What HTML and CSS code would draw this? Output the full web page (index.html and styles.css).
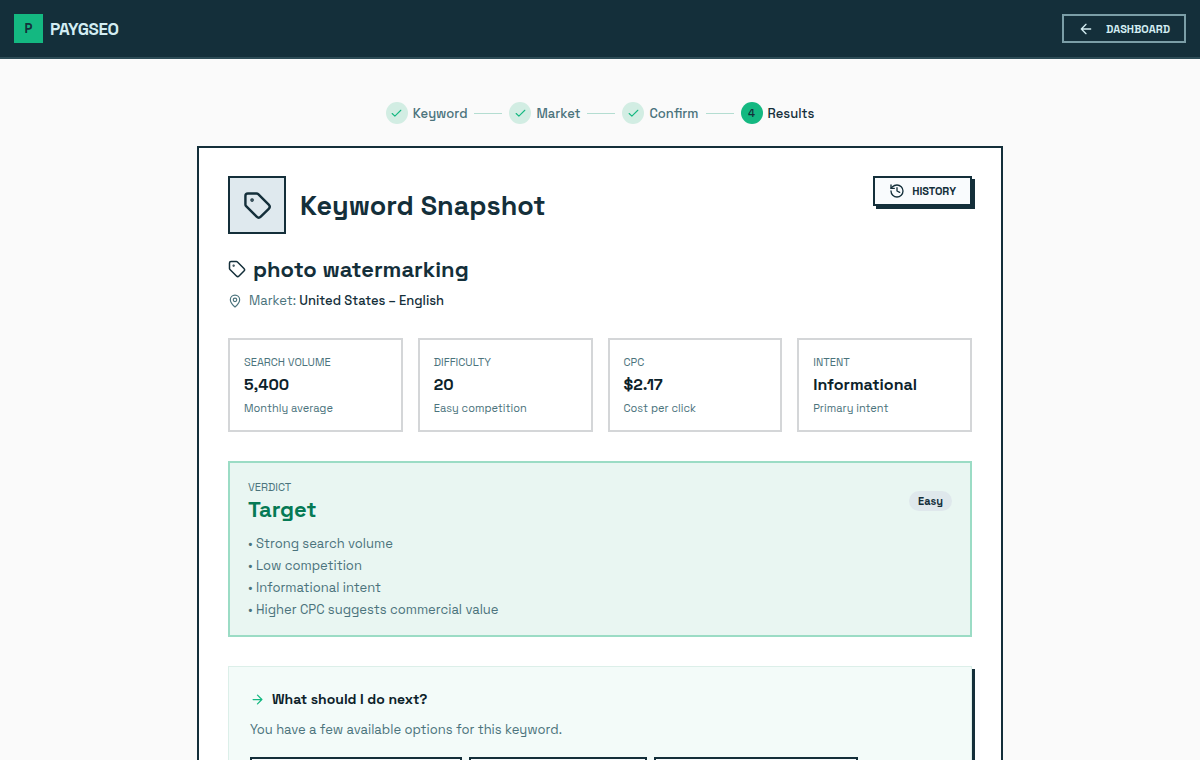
FILE: index.html
```html
<!DOCTYPE html>
<html lang="en">
<head>
    <meta charset="UTF-8">
    <meta name="viewport" content="width=device-width, initial-scale=1.0">
    <title>Keyword Snapshot - PAYGSEO</title>
    <link rel="stylesheet" href="styles.css">
</head>
<body>
    <header class="topbar">
        <a href="#" class="brand">
            <span class="brand-logo">P</span>
            <span class="brand-name">PAYGSEO</span>
        </a>
        <a href="#" class="dashboard-link">
            <svg class="icon" width="16" height="16" viewBox="0 0 24 24"><path d="m12 19-7-7 7-7M19 12H5"/></svg>
            DASHBOARD
        </a>
    </header>

    <main class="page">
        <!-- Steps -->
        <ol class="steps">
            <li class="step">
                <span class="step-dot"><svg class="icon" width="13" height="13" viewBox="0 0 24 24"><path d="M20 6 9 17l-5-5"/></svg></span>
                Keyword
            </li>
            <li class="step">
                <span class="step-dot"><svg class="icon" width="13" height="13" viewBox="0 0 24 24"><path d="M20 6 9 17l-5-5"/></svg></span>
                Market
            </li>
            <li class="step">
                <span class="step-dot"><svg class="icon" width="13" height="13" viewBox="0 0 24 24"><path d="M20 6 9 17l-5-5"/></svg></span>
                Confirm
            </li>
            <li class="step active">
                <span class="step-dot">4</span>
                Results
            </li>
        </ol>

        <section class="panel">
            <div class="panel-head">
                <div class="title-icon">
                    <svg class="icon" width="29" height="29" viewBox="0 0 24 24"><path d="M12.586 2.586A2 2 0 0 0 11.172 2H4a2 2 0 0 0-2 2v7.172a2 2 0 0 0 .586 1.414l8.704 8.704a2.426 2.426 0 0 0 3.42 0l6.58-6.58a2.426 2.426 0 0 0 0-3.42z"/><circle cx="7.5" cy="7.5" r=".5" fill="currentColor"/></svg>
                </div>
                <h1>Keyword Snapshot</h1>
                <button type="button" class="history-btn">
                    <svg class="icon" width="16" height="16" viewBox="0 0 24 24"><path d="M3 12a9 9 0 1 0 9-9 9.75 9.75 0 0 0-6.74 2.74L3 8"/><path d="M3 3v5h5M12 7v5l4 2"/></svg>
                    HISTORY
                </button>
            </div>

            <h2 class="keyword">
                <svg class="icon" width="18" height="18" viewBox="0 0 24 24"><path d="M12.586 2.586A2 2 0 0 0 11.172 2H4a2 2 0 0 0-2 2v7.172a2 2 0 0 0 .586 1.414l8.704 8.704a2.426 2.426 0 0 0 3.42 0l6.58-6.58a2.426 2.426 0 0 0 0-3.42z"/><circle cx="7.5" cy="7.5" r=".5" fill="currentColor"/></svg>
                photo watermarking
            </h2>
            <p class="market">
                <svg class="icon" width="14" height="14" viewBox="0 0 24 24"><path d="M20 10c0 4.993-5.539 10.193-7.399 11.799a1 1 0 0 1-1.202 0C9.539 20.193 4 14.993 4 10a8 8 0 0 1 16 0"/><circle cx="12" cy="10" r="3"/></svg>
                <span>Market: <strong>United States – English</strong></span>
            </p>

            <!-- Metrics -->
            <div class="stats">
                <div class="stat">
                    <div class="label">SEARCH VOLUME</div>
                    <div class="stat-value">5,400</div>
                    <div class="stat-note">Monthly average</div>
                </div>
                <div class="stat">
                    <div class="label">DIFFICULTY</div>
                    <div class="stat-value">20</div>
                    <div class="stat-note">Easy competition</div>
                </div>
                <div class="stat">
                    <div class="label">CPC</div>
                    <div class="stat-value">$2.17</div>
                    <div class="stat-note">Cost per click</div>
                </div>
                <div class="stat">
                    <div class="label">INTENT</div>
                    <div class="stat-value">Informational</div>
                    <div class="stat-note">Primary intent</div>
                </div>
            </div>

            <!-- Verdict -->
            <div class="verdict">
                <div class="verdict-head">
                    <div>
                        <div class="label">VERDICT</div>
                        <div class="verdict-value">Target</div>
                    </div>
                    <span class="badge">Easy</span>
                </div>
                <ul class="reasons">
                    <li>• Strong search volume</li>
                    <li>• Low competition</li>
                    <li>• Informational intent</li>
                    <li>• Higher CPC suggests commercial value</li>
                </ul>
            </div>

            <!-- Next steps -->
            <div class="next">
                <h3>
                    <svg class="icon" width="15" height="15" viewBox="0 0 24 24"><path d="M5 12h14M12 5l7 7-7 7"/></svg>
                    What should I do next?
                </h3>
                <p>You have a few available options for this keyword.</p>
                <div class="actions">
                    <button type="button" class="action action-lg" aria-label="First option"></button>
                    <button type="button" class="action action-sm" aria-label="Second option"></button>
                    <button type="button" class="action action-md" aria-label="Third option"></button>
                </div>
            </div>
        </section>
    </main>
</body>
</html>
```
FILE: styles.css
```css
* {
    box-sizing: border-box;
    margin: 0;
    padding: 0;
}
body {
    height: 100vh;
    overflow: hidden;
    background: #fafafa;
    color: #142f3a;
    font-family: "Space Grotesk", Inter, sans-serif;
    font-size: 13px;
}
.icon {
    flex: none;
    fill: none;
    stroke: currentColor;
    stroke-width: 2;
    stroke-linecap: round;
    stroke-linejoin: round;
}

/* Top bar */
.topbar {
    display: flex;
    align-items: center;
    justify-content: space-between;
    padding: 14px;
    background: #142f3a;
    border-bottom: 2px solid #2d4c56;
}
.brand {
    display: flex;
    align-items: center;
    gap: 7px;
    color: #d3edf2;
    text-decoration: none;
}
.brand-logo {
    display: flex;
    align-items: center;
    justify-content: center;
    width: 29px;
    height: 29px;
    background: #14b881;
    color: #142f3a;
    font-size: 13px;
    font-weight: 600;
}
.brand-name {
    font-size: 17px;
    font-weight: 700;
    letter-spacing: -0.025em;
}
.dashboard-link {
    display: flex;
    align-items: center;
    gap: 12px;
    height: 29px;
    padding: 0 14px;
    border: 2px solid #7b9ea7;
    color: #d3edf2;
    font-size: 11px;
    font-weight: 700;
    text-decoration: none;
}

/* Steps */
.page {
    padding: 43px 16px 0;
}
.steps {
    display: flex;
    justify-content: center;
    gap: 7px;
    list-style: none;
}
.step {
    display: flex;
    align-items: center;
    gap: 5px;
    color: #4b737c;
    font-weight: 500;
}
.step:not(:last-child)::after {
    content: "";
    width: 28px;
    height: 1px;
    margin-left: 2px;
    background: #b4ddd1;
}
.step-dot {
    display: flex;
    align-items: center;
    justify-content: center;
    width: 22px;
    height: 22px;
    border-radius: 50%;
    background: #d2ede3;
    color: #14b881;
    font-size: 11px;
}
.step.active {
    color: #142f3a;
    font-weight: 500;
}
.step.active .step-dot {
    background: #14b881;
    color: #142f3a;
}

/* Main panel */
.panel {
    max-width: 806px;
    margin: 22px auto 0;
    padding: 28px 29px;
    background: #fff;
    border: 2px solid #142f3a;
}
.panel-head {
    display: flex;
    align-items: center;
    gap: 14px;
}
.title-icon {
    display: flex;
    align-items: center;
    justify-content: center;
    width: 58px;
    height: 58px;
    background: #dfe9ee;
    border: 2px solid #142f3a;
}
h1 {
    font-size: 27px;
    font-weight: 700;
}
.history-btn {
    display: flex;
    align-items: center;
    align-self: flex-start;
    gap: 7px;
    height: 30px;
    margin-left: auto;
    padding: 0 14px;
    background: #f9fbfd;
    border: 2px solid #142f3a;
    box-shadow: 3px 3px 0 #142f3a;
    color: #142f3a;
    font-family: inherit;
    font-size: 11px;
    font-weight: 600;
    cursor: pointer;
}
.keyword {
    display: flex;
    align-items: center;
    gap: 7px;
    margin-top: 21px;
    font-size: 22px;
    font-weight: 700;
    line-height: 28px;
}
.market {
    display: flex;
    align-items: center;
    gap: 7px;
    margin-top: 8px;
    color: #4b737c;
    line-height: 20px;
}
.market strong {
    color: #142f3a;
    font-weight: 500;
}

/* Metrics */
.stats {
    display: grid;
    grid-template-columns: repeat(4, 1fr);
    gap: 15px;
    margin-top: 27px;
}
.stat {
    padding: 14px;
    border: 2px solid #d4d6d8;
}
.label {
    color: #4b737c;
    font-size: 11px;
    line-height: 16px;
}
.stat-value {
    color: #0c222a;
    font-size: 16px;
    font-weight: 600;
    line-height: 30px;
}
.stat-note {
    color: #4b737c;
    font-size: 11px;
    line-height: 16px;
}

/* Verdict */
.verdict {
    margin-top: 29px;
    padding: 16px 18px 14px;
    background: #e9f6f2;
    border: 2px solid #9bdcc5;
}
.verdict-head {
    display: flex;
    align-items: center;
    justify-content: space-between;
}
.verdict-value {
    color: #067a55;
    font-size: 22px;
    font-weight: 700;
    line-height: 28px;
}
.badge {
    padding: 0 9px;
    background: #dfe8ec;
    border-radius: 10px;
    font-size: 11px;
    font-weight: 600;
    line-height: 20px;
}
.reasons {
    margin-top: 10px;
    color: #4b737c;
    line-height: 22px;
    list-style: none;
}

/* Next steps */
.next {
    margin-top: 29px;
    padding: 21px;
    background: #f3fbf9;
    border: 1px solid #dcefe9;
    box-shadow: 3px 3px 0 #142f3a;
}
.next h3 {
    display: flex;
    align-items: center;
    gap: 7px;
    color: #0c222a;
    font-size: 14px;
    font-weight: 600;
    line-height: 22px;
}
.next h3 .icon {
    color: #14b881;
}
.next p {
    margin-top: 9px;
    color: #4b737c;
    line-height: 22px;
}
.actions {
    display: flex;
    gap: 7px;
    margin-top: 16px;
}
.action {
    height: 36px;
    background: #f9fbfd;
    border: 2px solid #142f3a;
    box-shadow: 3px 3px 0 #142f3a;
    cursor: pointer;
}
.action-lg {
    width: 212px;
}
.action-md {
    width: 204px;
}
.action-sm {
    width: 178px;
}
```
